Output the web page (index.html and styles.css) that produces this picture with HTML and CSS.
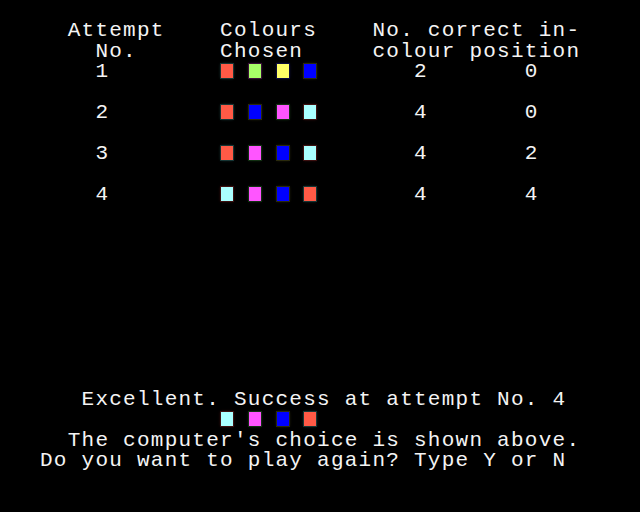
FILE: index.html
```html
<!DOCTYPE html>
<html>
<head>
<meta charset="utf-8">
<link rel="stylesheet" href="styles.css">
</head>
<body>
<div class="screen">
<div class="row"> </div>
<div class="row">  Attempt    Colours    No. correct in-</div>
<div class="row">    No.      Chosen     colour position</div>
<div class="row">    1        <span class="sq r"></span> <span class="sq g"></span> <span class="sq y"></span> <span class="sq b"></span>       2       0</div>
<div class="row"> </div>
<div class="row">    2        <span class="sq r"></span> <span class="sq b"></span> <span class="sq m"></span> <span class="sq c"></span>       4       0</div>
<div class="row"> </div>
<div class="row">    3        <span class="sq r"></span> <span class="sq m"></span> <span class="sq b"></span> <span class="sq c"></span>       4       2</div>
<div class="row"> </div>
<div class="row">    4        <span class="sq c"></span> <span class="sq m"></span> <span class="sq b"></span> <span class="sq r"></span>       4       4</div>
<div class="row"> </div>
<div class="row"> </div>
<div class="row"> </div>
<div class="row"> </div>
<div class="row"> </div>
<div class="row"> </div>
<div class="row"> </div>
<div class="row"> </div>
<div class="row"> </div>
<div class="row">   Excellent. Success at attempt No. 4</div>
<div class="row">             <span class="sq c"></span> <span class="sq m"></span> <span class="sq b"></span> <span class="sq r"></span></div>
<div class="row">  The computer's choice is shown above.</div>
<div class="row">Do you want to play again? Type Y or N</div>
</div>
</body>
</html>
```

FILE: styles.css
```css
html, body {
  margin: 0;
  padding: 0;
  background: #000;
}
.screen {
  width: 640px;
  height: 512px;
  overflow: hidden;
  box-sizing: border-box;
  padding-left: 40px;
  padding-top: 0.7px;
  background: #000;
  color: #f4f4f4;
  font-family: "Liberation Mono", "DejaVu Sans Mono", monospace;
  font-size: 21px;
  letter-spacing: 1.25px;
}
.row {
  height: 20.48px;
  line-height: 20.48px;
  white-space: pre;
}
.sq {
  display: inline-block;
  vertical-align: top;
  width: 12px;
  height: 14px;
  margin: 1.8px 0.6px 0 1.25px;
}
.r { background: #ff5a46; box-shadow: 0 0 0 1px #163534, 0 0 3px #1e4a48; }
.g { background: #a8ff68; box-shadow: 0 0 0 1px #3a1138, 0 0 3px #5a1a55; }
.y { background: #ffff66; box-shadow: 0 0 0 1px #0c0c3c, 0 0 3px #141460; }
.b { background: #0000ff; box-shadow: 0 0 0 1px #2a2a0c, 0 0 3px #3a3a10; }
.m { background: #ff55ff; box-shadow: 0 0 0 1px #123012, 0 0 3px #1c4a1c; }
.c { background: #aaffff; box-shadow: 0 0 0 1px #3c1010, 0 0 3px #5a1616; }
```
